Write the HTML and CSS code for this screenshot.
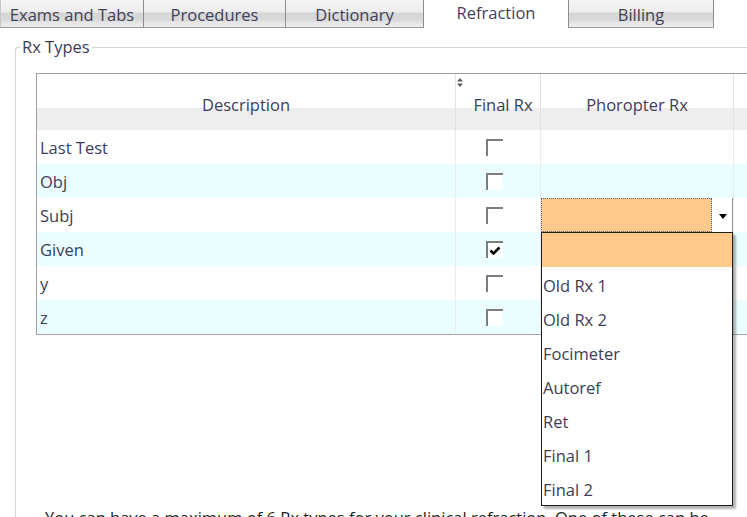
FILE: index.html
```html
<!DOCTYPE html>
<html>
<head>
<meta charset="utf-8">
<link rel="stylesheet" href="styles.css">
</head>
<body>
<div class="app">
  <div class="tabs">
    <div class="tab tab-first tab-w1">Exams and Tabs</div>
    <div class="tab tab-w2">Procedures</div>
    <div class="tab tab-w3">Dictionary</div>
    <div class="tab tab-active">Refraction</div>
    <div class="tab tab-last">Billing</div>
    <div class="tab-fill"></div>
  </div>

  <fieldset class="group">
    <legend class="group-title">Rx Types</legend>

    <div class="grid">
      <div class="row head">
        <div class="cell hcell">Description</div>
        <div class="cell hcell hfinal">
          <svg class="sort" width="6" height="9" viewBox="0 0 6 9"><path d="M0 3.6 L3 0 L6 3.6 Z M0 5.4 L3 9 L6 5.4 Z" fill="#5a5a5a"/></svg>
          Final Rx
        </div>
        <div class="cell hcell">Phoropter Rx</div>
        <div class="cell hcell"></div>
      </div>

      <div class="row">
        <div class="cell desc">Last Test</div>
        <div class="cell chk"><span class="box"></span></div>
        <div class="cell"></div>
        <div class="cell"></div>
      </div>
      <div class="row alt">
        <div class="cell desc">Obj</div>
        <div class="cell chk"><span class="box"></span></div>
        <div class="cell"></div>
        <div class="cell"></div>
      </div>
      <div class="row">
        <div class="cell desc">Subj</div>
        <div class="cell chk"><span class="box"></span></div>
        <div class="cell combo-cell">
          <div class="combo">
            <div class="combo-field"></div>
            <div class="combo-btn">
              <svg width="8" height="5" viewBox="0 0 8 5"><path d="M0 0 L8 0 L4 5 Z" fill="#000"/></svg>
            </div>
          </div>
          <ul class="dropdown">
            <li class="opt opt-sel">&nbsp;</li>
            <li class="opt">Old Rx 1</li>
            <li class="opt">Old Rx 2</li>
            <li class="opt">Focimeter</li>
            <li class="opt">Autoref</li>
            <li class="opt">Ret</li>
            <li class="opt">Final 1</li>
            <li class="opt">Final 2</li>
          </ul>
        </div>
        <div class="cell"></div>
      </div>
      <div class="row alt">
        <div class="cell desc">Given</div>
        <div class="cell chk"><span class="box checked">
          <svg width="15" height="15" viewBox="0 0 15 15"><path d="M2.5 7.5 L5.5 10.5 L11.5 4.5" fill="none" stroke="#000" stroke-width="2.6"/></svg>
        </span></div>
        <div class="cell"></div>
        <div class="cell"></div>
      </div>
      <div class="row">
        <div class="cell desc">y</div>
        <div class="cell chk"><span class="box"></span></div>
        <div class="cell"></div>
        <div class="cell"></div>
      </div>
      <div class="row alt">
        <div class="cell desc">z</div>
        <div class="cell chk"><span class="box"></span></div>
        <div class="cell"></div>
        <div class="cell"></div>
      </div>
    </div>

    <p class="note">You can have a maximum of 6 Rx types for your clinical refraction. One of these can be marked as the Final Rx.</p>
  </fieldset>
</div>
</body>
</html>
```

FILE: styles.css
```css
html, body {
  margin: 0;
  padding: 0;
  background: #ffffff;
}

.app {
  width: 747px;
  height: 517px;
  overflow: hidden;
  position: relative;
  background: #ffffff;
  font-family: "Open Sans", "Noto Sans", sans-serif;
  font-size: 16.5px;
  color: #3d3d56;
}

/* Tabs */
.tabs {
  display: flex;
  height: 28px;
}

.tab {
  box-sizing: border-box;
  height: 28px;
  padding-top: 4px;
  line-height: 22px;
  text-align: center;
  white-space: nowrap;
  color: #414158;
  border-bottom: 1px solid #9c9c9c;
  border-right: 1px solid #8e8e8e;
  background: linear-gradient(to bottom, #f5f5f5 0%, #eeeeee 42%, #d6d6d6 50%, #d9d9d9 74%, #e6e6e6 84%, #ececec 100%);
}

.tab-first {
  border-left: 1px solid #c6c6c6;
}

.tab-w1 { width: 144px; }
.tab-w2 { width: 142px; }
.tab-w3 { width: 138px; }

.tab-active {
  width: 144px;
  background: #ffffff;
  border: none;
  padding-top: 2px;
}

.tab-last {
  width: 146px;
  border-left: 1px solid #8e8e8e;
}

.tab-fill {
  flex: 1;
}

/* Group box */
.group {
  margin: 8px -60px 0 15px;
  padding: 0;
  border: 1px solid #d4d4d4;
  border-right: none;
  border-radius: 3px 0 0 0;
  height: 600px;
  min-width: 0;
}

.group-title {
  margin-left: 4px;
  padding: 0 2px;
  line-height: 22px;
  color: #3d3d56;
}

/* Grid */
.grid {
  margin: 15px 0 0 20px;
  width: 780px;
  border-top: 1px solid #9e9e9e;
  border-left: 1px solid #9e9e9e;
  border-bottom: 1px solid #a4a4a4;
  display: flex;
  flex-direction: column;
}

.row {
  display: grid;
  grid-template-columns: 419px 85px 193px 1fr;
  height: 34px;
  background: #ffffff;
}

.row.alt {
  background: #ebfeff;
}

.row.head {
  height: 56px;
  background: linear-gradient(to bottom, #ffffff 0, #ffffff 34px, #eeeeee 34px, #eeeeee 100%);
}

.cell {
  box-sizing: border-box;
  border-right: 1px solid #e8ecec;
  line-height: 22px;
  position: relative;
  min-width: 0;
}

.hcell {
  display: flex;
  align-items: flex-end;
  justify-content: center;
  padding-bottom: 14px;
  border-right-color: #e0e0e0;
}

.hfinal {
  padding-left: 10px;
}

.sort {
  position: absolute;
  top: 4px;
  left: 1px;
}

.desc {
  display: flex;
  align-items: center;
  padding-left: 3px;
  padding-top: 2px;
}

.chk {
  display: flex;
  align-items: center;
  justify-content: center;
  padding-right: 8px;
}

.box {
  box-sizing: border-box;
  width: 17px;
  height: 17px;
  background: #ffffff;
  border-top: 2px solid #7d7d7d;
  border-left: 2px solid #7d7d7d;
  position: relative;
  display: block;
}

.box svg {
  display: block;
}

/* Combo */
.combo-cell {
  border-right-color: #e8ecec;
}

.combo {
  display: flex;
  height: 34px;
}

.combo-field {
  flex: 1;
  box-sizing: border-box;
  background: #ffca8b;
  border: 1px dotted #55607a;
}

.combo-btn {
  box-sizing: border-box;
  width: 21px;
  background: #ffffff;
  border-right: 1px solid #9a9a9a;
  display: flex;
  align-items: center;
  justify-content: center;
  padding-left: 2px;
  padding-top: 3px;
}

.combo-btn svg {
  display: block;
}

.dropdown {
  position: absolute;
  top: 100%;
  left: 0;
  z-index: 5;
  box-sizing: border-box;
  width: 192px;
  margin: 0;
  padding: 0;
  list-style: none;
  background: #ffffff;
  border: 1px solid #1e1e1e;
  box-shadow: 3px 3px 2px rgba(0, 0, 0, 0.3);
}

.opt {
  box-sizing: border-box;
  height: 34px;
  line-height: 34px;
  padding-left: 1px;
  padding-top: 2px;
  color: #3d3d56;
  white-space: nowrap;
}

.opt-sel {
  background: #ffca8b;
}

/* Note */
.note {
  width: 700px;
  margin: 172px 0 0 29px;
  line-height: 22px;
  color: #1f1f24;
}
```
